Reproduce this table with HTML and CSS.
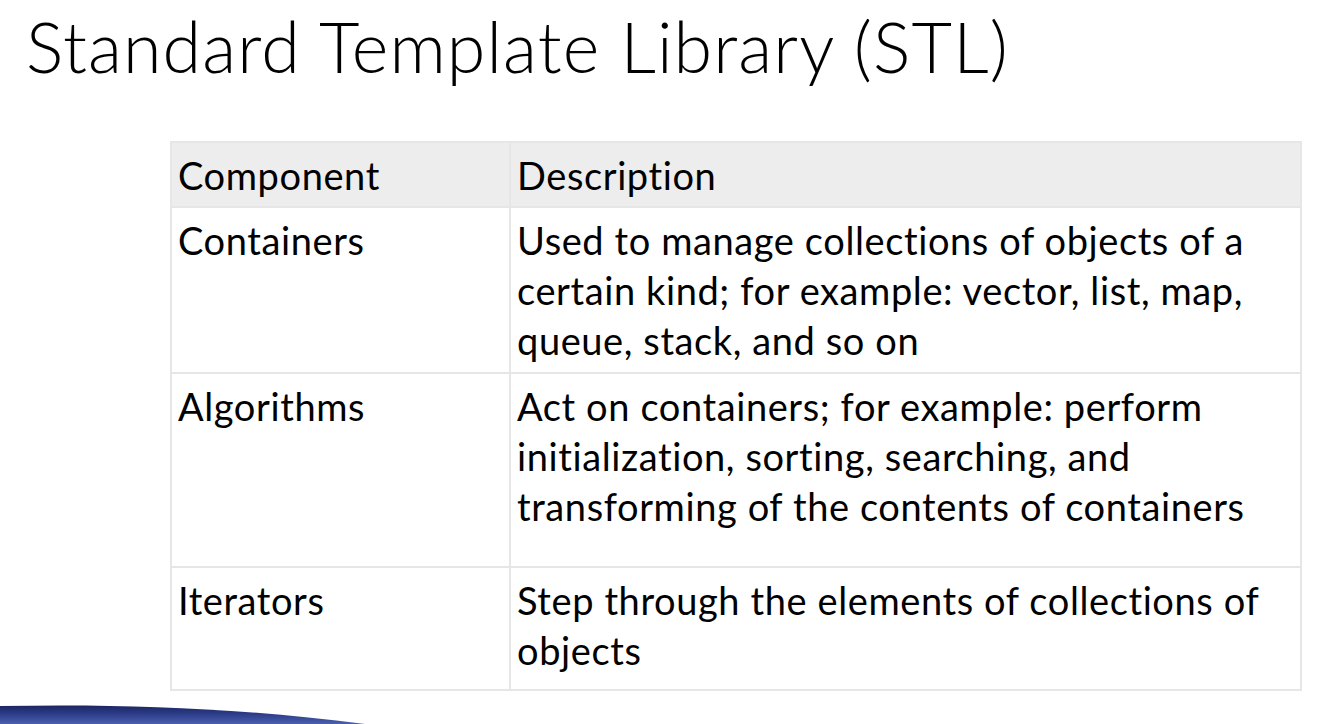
FILE: index.html
```html
<!DOCTYPE html>
<html lang="en">
<head>
<meta charset="utf-8">
<title>Standard Template Library (STL)</title>
<link rel="stylesheet" href="styles.css">
</head>
<body>
<div class="slide">
  <h1 class="title">Standard Template Library (STL)</h1>
  <table class="stl">
    <thead>
      <tr class="row-head">
        <th class="col-a">Component</th>
        <th class="col-b">Description</th>
      </tr>
    </thead>
    <tbody>
      <tr class="row-1">
        <td>Containers</td>
        <td>Used to manage collections of objects of a certain kind; for example: vector, list, map, queue, stack, and so on</td>
      </tr>
      <tr class="row-2">
        <td>Algorithms</td>
        <td>Act on containers; for example: perform initialization, sorting, searching, and transforming of the contents of containers</td>
      </tr>
      <tr class="row-3">
        <td>Iterators</td>
        <td>Step through the elements of collections of objects</td>
      </tr>
    </tbody>
  </table>
  <svg class="swoosh" width="420" height="24" viewBox="0 0 420 24" aria-hidden="true">
    <defs>
      <linearGradient id="sw" x1="0" y1="0" x2="0" y2="1">
        <stop offset="0" stop-color="#1b2562"/>
        <stop offset="0.45" stop-color="#2c3c88"/>
        <stop offset="1" stop-color="#4a5fae"/>
      </linearGradient>
    </defs>
    <path d="M0 6 C 120 4, 230 7, 365 24 L 0 24 Z" fill="url(#sw)"/>
  </svg>
</div>
</body>
</html>
```
FILE: styles.css
```css
html, body {
  margin: 0;
  padding: 0;
  background: #ffffff;
}
.slide {
  position: relative;
  width: 1334px;
  height: 724px;
  overflow: hidden;
  font-family: Lato, "Open Sans", sans-serif;
  color: #000;
}
.title {
  margin: 0;
  padding: 4px 0 0 26px;
  font-weight: 300;
  font-size: 70px;
  line-height: 84px;
  letter-spacing: 1.1px;
}
.stl {
  margin: 53px 0 0 170px;
  width: 1132px;
  border-collapse: collapse;
  font-size: 38px;
  line-height: 50px;
  letter-spacing: 0.6px;
  table-layout: fixed;
}
.stl th, .stl td {
  border: 2px solid #e6e6e6;
  padding: 7px 6px 0 6px;
  text-align: left;
  vertical-align: top;
  font-weight: 400;
}
.col-a { width: 325px; }
.row-head th {
  background: #ededed;
  height: 56px;
}
.row-1 td { height: 157px; }
.row-2 td { height: 185px; }
.row-3 td { height: 114px; }
.swoosh {
  position: absolute;
  left: 0;
  bottom: 0;
}
```
